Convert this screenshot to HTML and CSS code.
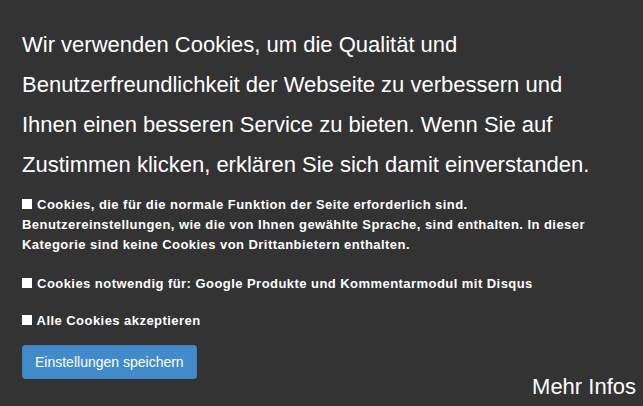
FILE: index.html
```html
<!DOCTYPE html>
<html lang="de">
<head>
  <meta charset="UTF-8" />
  <title>Cookie Einstellungen</title>
  <meta name="viewport" content="width=device-width, initial-scale=1" />
  <link rel="stylesheet" href="styles.css">
</head>
<body>
  <div class="cookie-box">
    <p class="intro">Wir verwenden Cookies, um die Qualität und Benutzerfreundlichkeit der Webseite zu verbessern und Ihnen einen besseren Service zu bieten. Wenn Sie auf Zustimmen klicken, erklären Sie sich damit einverstanden.</p>
    <label class="option option-first"><span class="check"></span> Cookies, die für die normale Funktion der Seite erforderlich sind.<br>Benutzereinstellungen, wie die von Ihnen gewählte Sprache, sind enthalten. In dieser<br>Kategorie sind keine Cookies von Drittanbietern enthalten.</label>
    <label class="option"><span class="check"></span> Cookies notwendig für: Google Produkte und Kommentarmodul mit Disqus</label>
    <label class="option option-last"><span class="check"></span> Alle Cookies akzeptieren</label>
    <div class="footer">
      <button class="save">Einstellungen speichern</button>
      <a class="more" href="#">Mehr Infos</a>
    </div>
  </div>
</body>
</html>
```

FILE: styles.css
```css
body {
  margin: 0;
  background: #333333;
  font-family: 'Liberation Sans', Arial, Helvetica, sans-serif;
  color: #fff;
}
.cookie-box {
  padding: 25px 7px 0 22px;
}
.intro {
  margin: 0;
  font-size: 22px;
  line-height: 40px;
  padding-right: 20px;
}
.option {
  display: block;
  margin-top: 19px;
  font-size: 13px;
  font-weight: bold;
  letter-spacing: 0.45px;
  line-height: 20px;
  white-space: nowrap;
}
.option-first {
  margin-top: 10px;
}
.option-last {
  margin-top: 17px;
}
.check {
  display: inline-block;
  width: 10px;
  height: 10px;
  background: #fff;
  margin-right: 1px;
}
.footer {
  display: flex;
  justify-content: space-between;
  align-items: flex-end;
  margin-top: 14px;
}
.save {
  background: #428bca;
  color: #fff;
  border: 1px solid #3d84c2;
  border-radius: 3px;
  padding: 0 12px;
  height: 34px;
  font-family: inherit;
  font-size: 14px;
  margin-bottom: 27px;
}
.more {
  color: #fff;
  text-decoration: none;
  font-size: 22px;
  line-height: 24px;
  margin-bottom: 7px;
}
```
